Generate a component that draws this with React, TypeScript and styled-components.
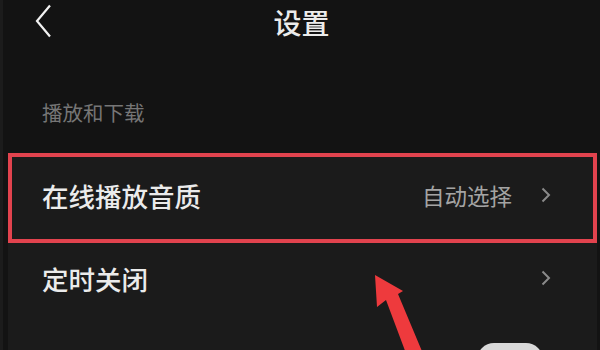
import React from "react";
import styled, { createGlobalStyle } from "styled-components";

const GlobalStyle = createGlobalStyle`
  html, body {
    margin: 0;
    padding: 0;
    background: #131313;
  }
  body {
    font-family: "Noto Sans CJK SC", "Noto Sans", sans-serif;
  }
`;

const Screen = styled.div`
  position: relative;
  width: 600px;
  height: 350px;
  overflow: hidden;
  background: #131313;
  border-left: 3px solid #1c1c1c;
  box-sizing: border-box;
`;

const Header = styled.header`
  position: relative;
  height: 44px;
  display: flex;
  align-items: center;
  justify-content: center;
`;

const BackButton = styled.button`
  position: absolute;
  left: 27px;
  top: 4px;
  width: 26px;
  height: 34px;
  padding: 0;
  border: 0;
  background: none;
  display: flex;
  align-items: center;
  justify-content: center;
`;

const Title = styled.h1`
  margin: 0;
  font-size: 28px;
  font-weight: 500;
  color: #ececec;
  letter-spacing: 0;
  line-height: 1;
`;

const SectionLabel = styled.div`
  box-sizing: border-box;
  padding: 56px 0 0 39px;
  height: 109px;
  font-size: 20.5px;
  color: #767676;
  line-height: 24px;
`;

const List = styled.div`
  margin: 0 3px 0 5px;
  background: #1b1b1b;
`;

const Row = styled.div<{ $height: number; $marked?: boolean; $lift?: number }>`
  height: ${p => p.$height}px;
  box-sizing: border-box;
  display: flex;
  align-items: center;
  padding: 0 41px ${p => p.$lift ?? 0}px 30px;
  border: 4px solid ${p => (p.$marked ? "#e2434e" : "transparent")};
`;

const RowTitle = styled.span`
  flex: 1;
  font-size: 26.5px;
  font-weight: 500;
  color: #ebebeb;
`;

const RowValue = styled.span`
  font-size: 22.5px;
  color: #a4a4a4;
  margin-right: 28px;
`;

const ToggleRow = styled.div`
  height: 90px;
  display: flex;
  justify-content: flex-end;
  padding: 28px 54px 0 0;
`;

const Toggle = styled.div`
  width: 66px;
  height: 34px;
  border-radius: 17px;
  background: #d9d9d9;
`;

const ArrowMark = styled.svg`
  position: absolute;
  left: 0;
  top: 0;
  pointer-events: none;
`;

const Chevron = () => (
  <svg width="12" height="16" viewBox="0 0 12 16">
    <path d="M2.5 1.5 L9 8 L2.5 14.5" fill="none" stroke="#8a8a8a" strokeWidth="2" />
  </svg>
);

export default function App() {
  return (
    <Screen>
      <GlobalStyle />
      <Header>
        <BackButton aria-label="返回">
          <svg width="18" height="34" viewBox="0 0 18 34">
            <path d="M16 1.5 L3 17 L16 32.5" fill="none" stroke="#f2f2f2" strokeWidth="2.2" />
          </svg>
        </BackButton>
        <Title>设置</Title>
      </Header>
      <SectionLabel>播放和下载</SectionLabel>
      <List>
        <Row $height={90} $marked $lift={6}>
          <RowTitle>在线播放音质</RowTitle>
          <RowValue>自动选择</RowValue>
          <Chevron />
        </Row>
        <Row $height={72} $lift={2}>
          <RowTitle>定时关闭</RowTitle>
          <Chevron />
        </Row>
        <ToggleRow>
          <Toggle />
        </ToggleRow>
      </List>
      <ArrowMark width="600" height="350" viewBox="0 0 600 350">
        <polygon
          points="372,275 374,307 383,300 404,356 421,356 395,294 400,291"
          fill="#ee3a3d"
        />
      </ArrowMark>
    </Screen>
  );
}
